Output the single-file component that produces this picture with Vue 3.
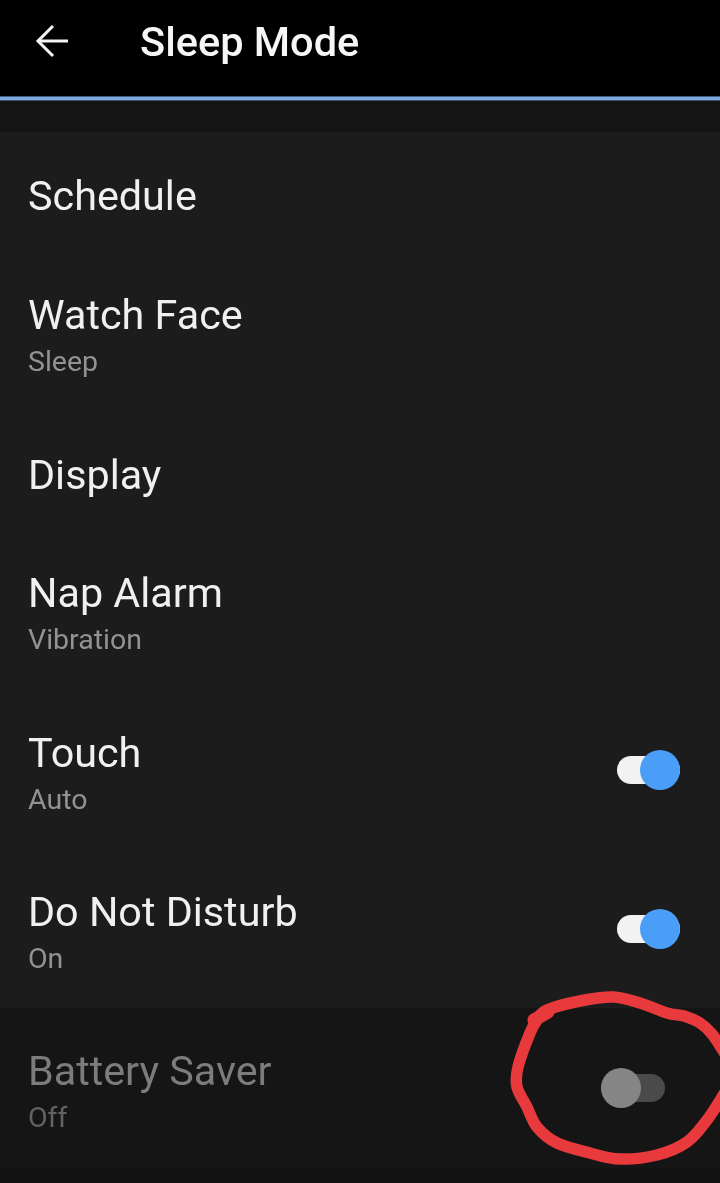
<script setup>
const rows = [
  { title: 'Schedule', h: 'h120' },
  { title: 'Watch Face', sub: 'Sleep', h: 'h160' },
  { title: 'Display', h: 'h118' },
  { title: 'Nap Alarm', sub: 'Vibration', h: 'h160' },
  { title: 'Touch', sub: 'Auto', h: 'h159', on: true },
  { title: 'Do Not Disturb', sub: 'On', h: 'h159', on: true },
]

const pts = [
  [724, 1052], [712, 1034], [700, 1023], [684, 1016], [667, 1013], [640, 1003], [613, 997],
  [580, 1001], [547, 1010], [537, 1020], [530, 1033], [518, 1067], [517, 1087], [527, 1107],
  [537, 1127], [557, 1143], [590, 1153], [620, 1159], [657, 1155], [687, 1142], [707, 1120], [724, 1094],
]
const f = (n) => n.toFixed(1)
let d = `M${pts[0][0]} ${pts[0][1]}`
for (let i = 0; i < pts.length - 1; i++) {
  const p0 = pts[Math.max(i - 1, 0)]
  const p1 = pts[i]
  const p2 = pts[i + 1]
  const p3 = pts[Math.min(i + 2, pts.length - 1)]
  d += ` C${f(p1[0] + (p2[0] - p0[0]) / 6)} ${f(p1[1] + (p2[1] - p0[1]) / 6)} ${f(p2[0] - (p3[0] - p1[0]) / 6)} ${f(p2[1] - (p3[1] - p1[1]) / 6)} ${p2[0]} ${p2[1]}`
}
const scribble = d
</script>

<template>
  <div class="page">
    <header class="bar">
      <svg class="back" width="36" height="36" viewBox="0 0 36 36" fill="none" stroke="#f4f4f4" stroke-width="3">
        <path d="M34 19 H4" />
        <path d="M19 4 L4 19 L19 34" />
      </svg>
      <h1>Sleep Mode</h1>
    </header>
    <div class="rule"></div>
    <div class="band"></div>
    <div class="row" v-for="r in rows" :key="r.title" :class="r.h">
      <div class="text">
        <div class="title">{{ r.title }}</div>
        <div v-if="r.sub" class="sub">{{ r.sub }}</div>
      </div>
      <div v-if="r.on" class="switch on"><span class="knob"></span></div>
    </div>
    <div class="row h160 disabled">
      <div class="text">
        <div class="title">Battery Saver</div>
        <div class="sub">Off</div>
      </div>
      <div class="switch off"><span class="knob"></span></div>
      <svg class="scribble" width="240" height="223" viewBox="480 960 240 223" fill="none" stroke="#e83a3c" stroke-width="11.5" stroke-linecap="round" stroke-linejoin="round">
        <path :d="scribble" />
        <path d="M534 1020 L548 1012" stroke-width="13" />
      </svg>
    </div>
  </div>
</template>

<style>
html, body { background: #111; }
</style>

<style scoped>
.page {
  width: 720px;
  height: 1183px;
  overflow: hidden;
  background: #111;
  font-family: Roboto, "Liberation Sans", sans-serif;
  color: #f2f2f2;
}
.bar {
  height: 96px;
  background: #000;
  display: flex;
  align-items: flex-start;
  padding-left: 34px;
  box-sizing: border-box;
}
.back { margin-top: 22px; }
h1 {
  margin: 18px 0 0 70px;
  font-size: 41.5px;
  line-height: 48px;
  font-weight: 500;
  color: #f6f6f6;
  filter: blur(0.4px);
}
.rule { height: 5px; background: linear-gradient(#1d3557, #7fa9dc 30%, #7fa9dc 70%, #16263c); }
.band { height: 31px; background: #141414; }
.row {
  display: flex;
  align-items: center;
  justify-content: space-between;
  padding: 0 40px 0 28px;
  box-sizing: border-box;
  position: relative;
  background: #1c1c1c;
}
.h120 { height: 120px; }
.h160 { height: 160px; }
.h159 { height: 159px; }
.h118 { height: 118px; }
.text { padding-top: 8px; filter: blur(0.4px); }
.title { font-size: 41.3px; line-height: 46px; color: #f0f0f0; }
.sub { font-size: 28.5px; line-height: 36px; margin-top: 6px; color: #929292; }
.switch { position: relative; width: 63px; height: 28px; border-radius: 14px; }
.switch.on { background: #f2f2f2; }
.switch.on .knob {
  position: absolute; right: 0; top: -6px;
  width: 40px; height: 40px; border-radius: 50%; background: #4b9ef7;
}
.disabled { background: #151515; }
.disabled .title { color: #7c7c7c; }
.disabled .sub { color: #626262; }
.switch.off { background: #4a4a4a; margin-right: 15px; width: 64px; }
.switch.off .knob {
  position: absolute; left: 0; top: -6px;
  width: 40px; height: 40px; border-radius: 50%; background: #858585;
}
.scribble { position: absolute; right: 0; top: -48px; }
</style>
